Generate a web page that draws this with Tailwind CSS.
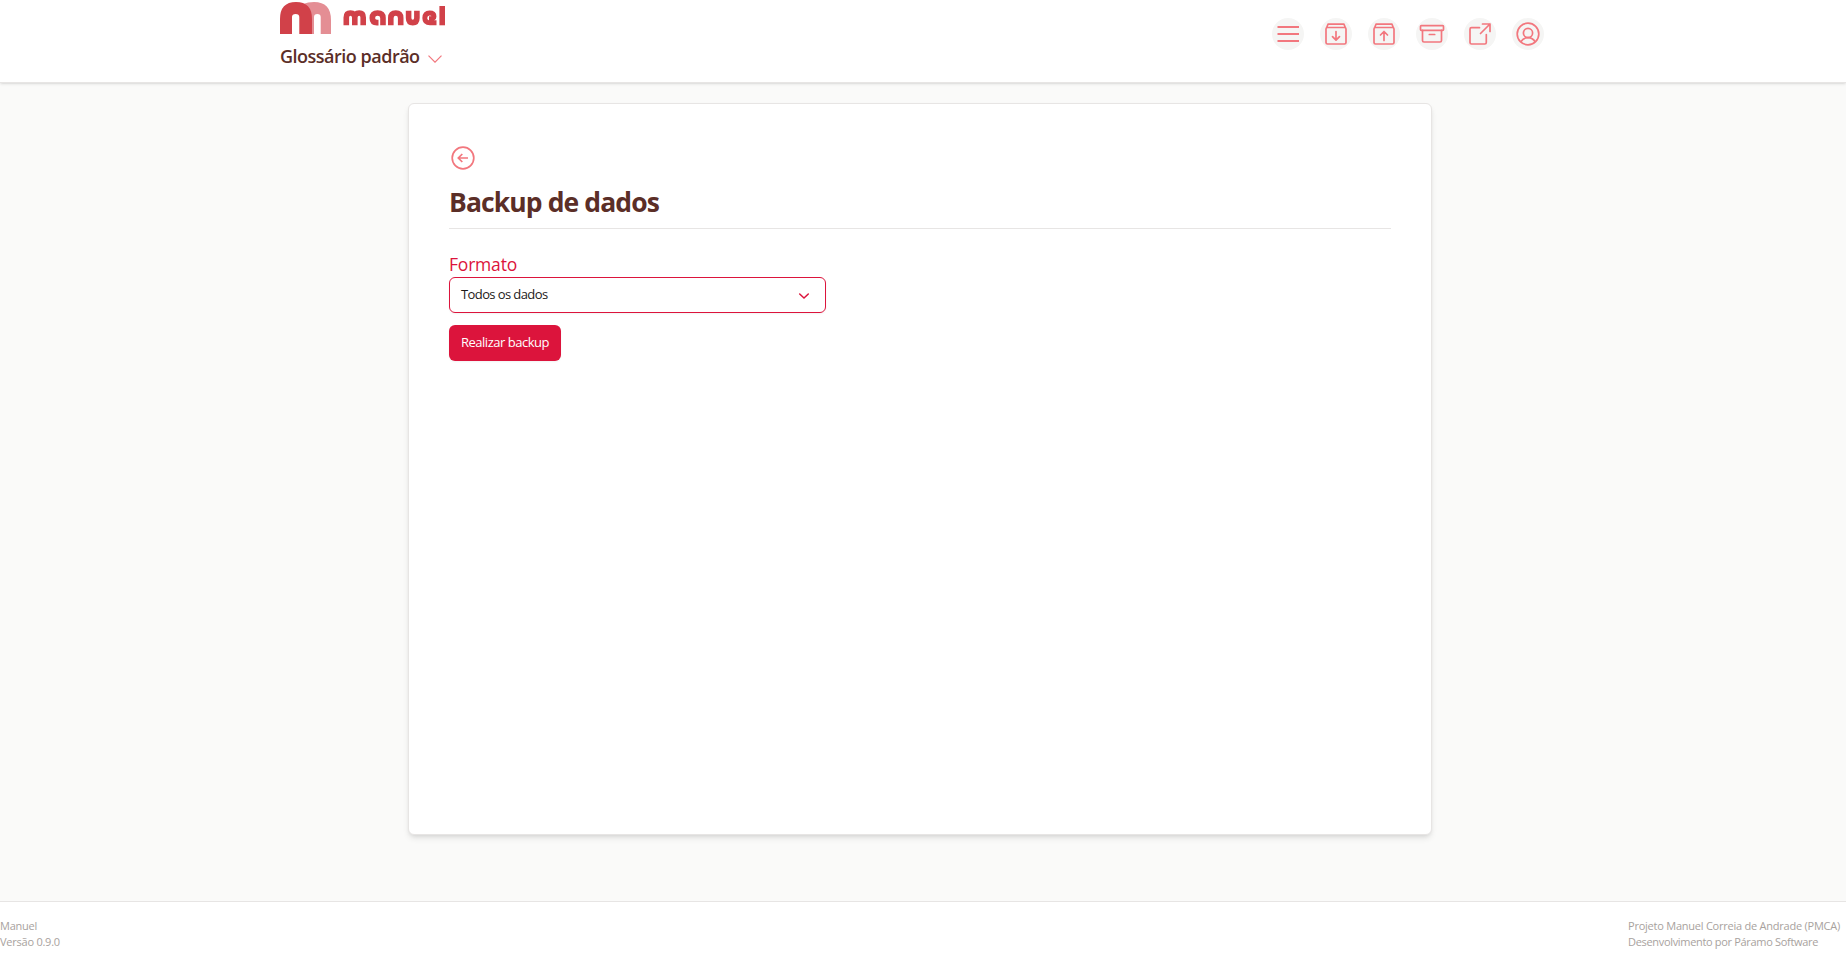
<!DOCTYPE html>
<html lang="pt-BR">
<head>
<meta charset="utf-8">
<title>Manuel</title>
<script src="https://cdn.jsdelivr.net/npm/@tailwindcss/browser@4"></script>
</head>
<body class="h-screen overflow-hidden bg-[#fafaf9] font-['Open_Sans','Noto_Sans',sans-serif] flex flex-col">
<header class="h-[83px] shrink-0 bg-white border-b border-[#e7e5e4] shadow-sm pl-[280px] pr-[302px] flex justify-between">
  <div class="flex flex-col">
    <svg class="w-[166px] h-[34px]" viewBox="0 0 166 34" fill="none">
      <path d="M23 4Q28 2 34 2Q51 2 51 20V34H40.700V17Q40.700 14 37.300 14Q34 14 34 17V34H31V17Z" fill="#e48e94"/>
      <path d="M0 34V19Q0 2 16 2Q32 2 32 19V34H19.300V17Q19.300 14 15.600 14Q12 14 12 17V34Z" fill="#d14149"/>
      <g stroke="#d14149" stroke-width="5.600">
        <path d="M66.300 25.300V17.500Q66.300 13 70.400 13Q74.800 13 74.800 17.500V25.300M74.800 17.500Q74.800 13 79.200 13Q83.200 13 83.200 17.500V25.300"/>
        <path d="M103 25.300V18Q103 13 97.600 13Q92.300 13 92.300 18Q92.300 22.600 97 22.600H98.500"/>
        <path d="M110.800 25.300V18Q110.800 13 115.800 13Q120.700 13 120.700 18V25.300"/>
        <path d="M128.600 10.700V18Q128.600 22.600 132.800 22.600Q136.900 22.600 136.900 18V10.700"/>
        <path d="M156.500 22.800H150Q144.800 22.800 144.800 18Q144.800 13 149.500 13Q154 13 154 16.500Q154 18.700 149 18.700" stroke-width="4.900"/>
        <path d="M162.200 6V25.300"/>
      </g>
    </svg>
    <div class="flex items-center h-[45px] gap-2 text-[18px] font-semibold text-[#5b2e27]"><span class="tracking-[-0.497px]">Glossário padrão</span>
      <svg class="w-[14px] h-2 mt-1" viewBox="0 0 14 8" fill="none" stroke="#f2777e" stroke-width="1.200"><path d="M.5 .7L7 7.200L13.500 .7"/></svg></div>
  </div>
  <nav class="flex gap-4 pt-[18px]">
    <a class="size-8 rounded-full bg-[#f5f5f4]"><svg class="size-8" viewBox="0 0 32 32" fill="none" stroke="#f2777e" stroke-width="1.800"><path d="M5.500 9H27M5.500 16H27M5.500 23H27"/></svg></a>
    <a class="size-8 rounded-full bg-[#f5f5f4]"><svg class="size-8" viewBox="0 0 32 32" fill="none" stroke="#f2777e" stroke-width="1.700" stroke-linejoin="round" stroke-linecap="round"><path d="M6.500 10L8 6.200H24L25.500 10M7.500 9.500H24.500Q26 9.500 26 11V24.500Q26 26 24.500 26H7.500Q6 26 6 24.500V11Q6 9.500 7.500 9.500ZM16 13.500V22M12.500 18.700L16 22.200L19.500 18.700"/></svg></a>
    <a class="size-8 rounded-full bg-[#f5f5f4]"><svg class="size-8" viewBox="0 0 32 32" fill="none" stroke="#f2777e" stroke-width="1.700" stroke-linejoin="round" stroke-linecap="round"><path d="M6.500 10L8 6.200H24L25.500 10M7.500 9.500H24.500Q26 9.500 26 11V24.500Q26 26 24.500 26H7.500Q6 26 6 24.500V11Q6 9.500 7.500 9.500ZM16 22.500V13.500M12.500 17L16 13.500L19.500 17"/></svg></a>
    <a class="size-8 rounded-full bg-[#f5f5f4]"><svg class="size-8" viewBox="0 0 32 32" fill="none" stroke="#f2777e" stroke-width="1.700" stroke-linejoin="round" stroke-linecap="round"><rect x="4.500" y="7.700" width="23" height="4.600" rx=".8"/><path d="M6.500 12.300V22.500Q6.500 24 8 24H24Q25.500 24 25.500 22.500V12.300M13.300 16.500H18.700"/></svg></a>
    <a class="size-8 rounded-full bg-[#f5f5f4]"><svg class="size-8" viewBox="0 0 32 32" fill="none" stroke="#f2777e" stroke-width="1.700" stroke-linejoin="round" stroke-linecap="round"><path d="M15.500 9.700H7.500Q6 9.700 6 11.200V24.500Q6 26 7.500 26H20.800Q22.300 26 22.300 24.500V16.500M16.500 15.500L26 6M18.500 6H26V13.500"/></svg></a>
    <a class="size-8 rounded-full bg-[#f5f5f4]"><svg class="size-8" viewBox="0 0 32 32" fill="none" stroke="#f2777e" stroke-width="1.700"><circle cx="16" cy="16" r="10.800"/><circle cx="16" cy="15" r="4.600"/><path d="M8.800 23.800Q11.500 19.500 16 19.600Q20.500 19.500 23.200 23.800"/></svg></a>
  </nav>
</header>
<main class="grow pt-5 pl-[408px]">
  <section class="w-[1024px] h-[732px] bg-white border border-[#e7e5e4] rounded-md shadow-md pt-[39px] px-10">
    <svg class="size-7" viewBox="0 0 28 28" fill="none" stroke="#f2777e" stroke-width="1.700"><circle cx="14" cy="15" r="10.800"/><path d="M19 15H10M13.300 11L9.300 15L13.300 19"/></svg>
    <h1 class="mt-3 h-[46px] leading-[38px] border-b border-[#e7e5e4] text-[26.500px] font-bold text-[#5b2e27] tracking-[-0.892px]">Backup de dados</h1>
    <div class="mt-[22px] h-[26px] leading-[26px] text-[17.500px] text-[#dc143c] tracking-[-0.2px]">Formato</div>
    <div class="w-[377px] h-9 border border-[#dc143c] rounded-md px-[11px] flex items-center justify-between text-[13px] text-[#1c1917] shadow-xs">
      <span class="tracking-[-0.598px]">Todos os dados</span>
      <svg class="w-3 h-2 mr-1 mt-0.5" viewBox="0 0 12 8" fill="none" stroke="#dc143c" stroke-width="1.500" stroke-linecap="round"><path d="M1.700 2L6 6L10.300 2"/></svg>
    </div>
    <button class="mt-3 w-[112px] h-9 block rounded-md bg-[#dc143c] text-white text-[13px] shadow-xs whitespace-nowrap tracking-[-0.485px]">Realizar backup</button>
  </section>
</main>
<footer class="h-[52px] shrink-0 bg-white border-t border-[#e7e5e4] flex justify-between pt-4 pr-[6px] text-[11px] leading-4 text-[#a8a29e]">
  <div class="tracking-[-0.235px]"><p>Manuel</p><p>Versão 0.9.0</p></div>
  <div><p class="tracking-[-0.233px]">Projeto Manuel Correia de Andrade (PMCA)</p><p class="tracking-[-0.322px]">Desenvolvimento por Páramo Software</p></div>
</footer>
</body>
</html>
